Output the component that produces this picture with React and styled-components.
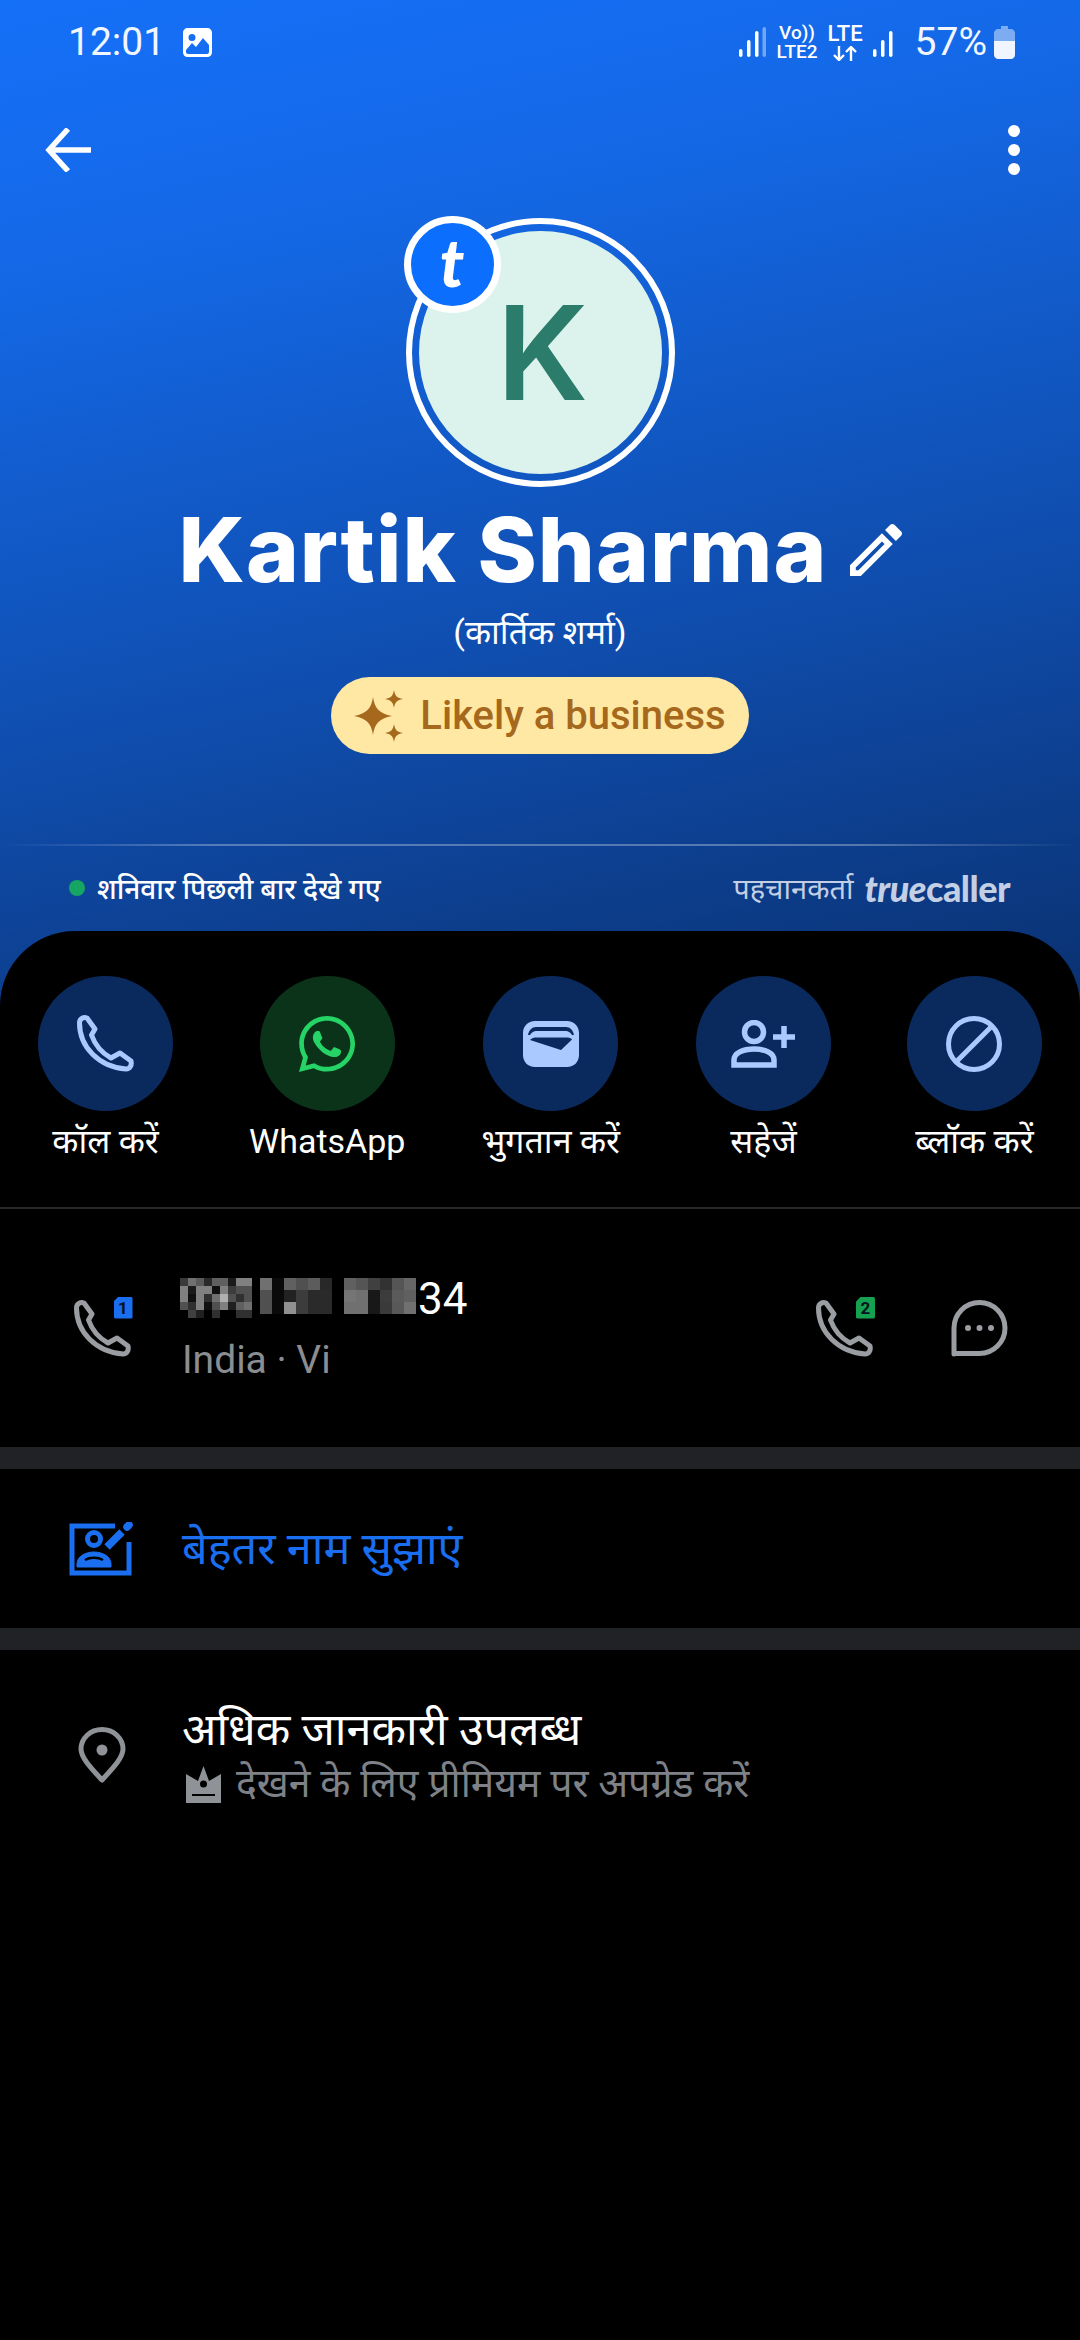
import React from "react";
import styled, { createGlobalStyle } from "styled-components";
import { FaWhatsapp } from "react-icons/fa";

const hindi = `Roboto, "Noto Sans", "Noto Sans Devanagari", "Lohit Devanagari", "DejaVu Sans", sans-serif`;

const GlobalStyle = createGlobalStyle`
  html, body {
    margin: 0;
    padding: 0;
    background: #000000;
  }
  * {
    box-sizing: border-box;
  }
`;

const PhoneIcon = ({ color, size = 57, stroke = 5 }) => (
  <svg width={size} height={size} viewBox="0 0 57 57" fill="none" stroke={color} strokeWidth={stroke} strokeLinejoin="round">
    <path d="M2.5 8 C2.5 3 7 2 10 3 L18 14 L14.5 20 C18 30 25 38 34 43 L43 38 L54 46 C55 50 53 54 49 54 C22 52 2.5 32 2.5 8Z" />
  </svg>
);

const ActionIcons = {
  wallet: (
    <svg width="56" height="46" viewBox="0 0 56 46">
      <path
        fill="#a9c9ff"
        fillRule="evenodd"
        d="M12 0 H44 C51 0 56 5 56 12 V34 C56 41 51 46 44 46 H12 C5 46 0 41 0 34 V12 C0 5 5 0 12 0Z M5 14 C6 9 9 6 13 6 H43 C47 6 50 9 51 14 L49 14 C47 11 45 10 43 10 H13 C11 10 9 11 7 14Z M7 19 C9 17 11 16.5 13 16.5 H43 C46 16.5 48 17 49 18.5 L38 29Z"
      />
    </svg>
  ),
  person: (
    <svg width="64" height="48" viewBox="0 0 64 48" fill="none" stroke="#a9c9ff" strokeWidth="5.5">
      <circle cx="23" cy="12" r="9.5" />
      <path d="M3 45 V40 C3 33 12 29 23 29 C34 29 43 33 43 40 V45Z" />
      <path d="M42 17 H64 M53 6 V28" />
    </svg>
  ),
  block: (
    <svg width="56" height="56" viewBox="0 0 56 56" fill="none" stroke="#a9c9ff" strokeWidth="5">
      <circle cx="28" cy="28" r="25.5" />
      <path d="M46 10 L10 46" />
    </svg>
  ),
};

const actions = [
  { label: "कॉल करें", icon: <PhoneIcon color="#a9c9ff" /> },
  { label: "WhatsApp", green: true, icon: <FaWhatsapp size={64} color="#25d366" /> },
  { label: "भुगतान करें", icon: ActionIcons.wallet },
  { label: "सहेजें", icon: ActionIcons.person },
  { label: "ब्लॉक करें", icon: ActionIcons.block },
];

// greys of the blurred part of the number: [x, cell size, rows]
const blurBlocks = [
  {
    x: 0,
    cell: 8,
    rows: [
      "3a705a2a60601a8080",
      "801a808010803c5050",
      "80108030 70b0503050",
      "503080105080206070",
      "004020003000003030",
    ],
  },
  { x: 80, cell: 12, rows: ["700a60505c28", "500a223c2a2a", "500a903c2a2a"] },
  { x: 164, cell: 12, rows: ["605540325566", "7570183c5a60", "7070183a5870"] },
];

function BlurredDigits() {
  const cells = [];
  blurBlocks.forEach((block) => {
    block.rows.forEach((row, r) => {
      const hex = row.replace(/\s/g, "");
      for (let c = 0; c < hex.length / 2; c++) {
        const g = hex.slice(c * 2, c * 2 + 2);
        cells.push(
          <rect key={`${block.x}-${r}-${c}`} x={block.x + c * block.cell} y={r * block.cell} width={block.cell} height={block.cell} fill={`#${g}${g}${g}`} />
        );
      }
    });
  });
  return (
    <svg width="236" height="42" viewBox="0 0 236 42" shapeRendering="crispEdges">
      {cells}
    </svg>
  );
}

export default function App() {
  return (
    <Page>
      <GlobalStyle />
      <StatusBar>
        <StatusLeft>
          <Clock>12:01</Clock>
          <svg width="29" height="29" viewBox="0 0 29 29">
            <path
              fill="#ffffff"
              fillRule="evenodd"
              d="M5 0 H24 C27 0 29 2 29 5 V24 C29 27 27 29 24 29 H5 C2 29 0 27 0 24 V5 C0 2 2 0 5 0Z M9 6 A3.5 3.5 0 1 0 9 13 A3.5 3.5 0 1 0 9 6Z M3 22 V24 C3 25 4 26 5 26 H24 C25 26 26 25 26 24 V17 L20 10 L13 19 L9 15Z"
            />
          </svg>
        </StatusLeft>
        <StatusRight>
          <Signal dim />
          <NetStack>
            <span>Vo))</span>
            <span>LTE2</span>
          </NetStack>
          <NetStack $wide>
            <span>LTE</span>
            <svg width="24" height="15" viewBox="0 0 24 15" fill="none" stroke="#ffffff" strokeWidth="2.4">
              <path d="M6 0 V14 M1 9 L6 14 L11 9 M18 15 V1 M13 6 L18 1 L23 6" />
            </svg>
          </NetStack>
          <Signal />
          <Battery>57%</Battery>
          <svg width="21" height="33" viewBox="0 0 21 33">
            <path fill="#ffffff" fillOpacity="0.45" d="M7 0 H14 V3 H17 C19 3 21 5 21 7 V15 H0 V7 C0 5 2 3 4 3 H7Z" />
            <path fill="#f0f5ff" d="M0 15 H21 V29 C21 31 19 33 17 33 H4 C2 33 0 31 0 29Z" />
          </svg>
        </StatusRight>
      </StatusBar>

      <Toolbar>
        <svg width="46" height="44" viewBox="0 0 46 44" fill="none" stroke="#ffffff" strokeWidth="5.5">
          <path d="M46 22 H4 M23 1 L4 22 L23 43" />
        </svg>
        <Dots>
          <i />
          <i />
          <i />
        </Dots>
      </Toolbar>

      <Hero>
        <Avatar>
          <AvatarInner>K</AvatarInner>
          <TrueBadge>t</TrueBadge>
        </Avatar>
        <NameRow>
          <Name>Kartik Sharma</Name>
          <svg width="52" height="54" viewBox="3 3 18 18">
            <path
              fill="#ffffff"
              d="M14.06 9.02l.92.92L5.92 19H5v-.92l9.06-9.06M17.66 3c-.25 0-.51.1-.7.29l-1.83 1.83 3.75 3.75 1.83-1.83c.39-.39.39-1.02 0-1.41l-2.34-2.34c-.2-.2-.45-.29-.71-.29zm-3.6 3.19L3 17.25V21h3.75L17.81 9.94l-3.75-3.75z"
            />
          </svg>
        </NameRow>
        <AltName>(कार्तिक शर्मा)</AltName>
        <Pill>
          <svg width="50" height="52" viewBox="0 0 50 52" fill="#a5681c">
            <path d="M19 7 C20.5 18 25 23.5 38 26 C25 28.5 20.5 34 19 45 C17.5 34 13 28.5 0 26 C13 23.5 17.5 18 19 7Z" />
            <path d="M40 0 C41 6 43 8 49 9 C43 10 41 12 40 18 C39 12 37 10 31 9 C37 8 39 6 40 0Z" />
            <path d="M40 34 C41 40 43 42 49 43 C43 44 41 46 40 52 C39 46 37 44 31 43 C37 42 39 40 40 34Z" />
          </svg>
          <PillText>Likely a business</PillText>
        </Pill>
      </Hero>

      <FadeLine />

      <InfoStrip>
        <LastSeen>
          <GreenDot />
          शनिवार पिछली बार देखे गए
        </LastSeen>
        <Credit>
          <CreditText>पहचानकर्ता</CreditText>
          <Brand>
            <em>true</em>caller
          </Brand>
        </Credit>
      </InfoStrip>

      <Sheet>
        <ActionRow>
          {actions.map((action) => (
            <Action key={action.label}>
              <ActionCircle $green={action.green}>{action.icon}</ActionCircle>
              <ActionLabel>{action.label}</ActionLabel>
            </Action>
          ))}
        </ActionRow>
        <ThinRule />

        <NumberRow>
          <IconSlot>
            <SimPhone>
              <PhoneIcon color="#9a9da1" />
              <SimBadge $color="#1a6ef0">1</SimBadge>
            </SimPhone>
          </IconSlot>
          <NumberText>
            <NumberLine>
              <BlurredDigits />
              <span>34</span>
            </NumberLine>
            <Carrier>India · Vi</Carrier>
          </NumberText>
          <RowEnd>
            <SimPhone>
              <PhoneIcon color="#9a9da1" />
              <SimBadge $color="#16a150">2</SimBadge>
            </SimPhone>
            <svg width="57" height="57" viewBox="0 0 57 57" fill="none" stroke="#9a9da1" strokeWidth="5" strokeLinejoin="round">
              <path d="M3 54 V28 A25.5 25.5 0 1 1 28.5 53.5 H3Z" />
              <g fill="#9a9da1" stroke="none">
                <circle cx="17" cy="28" r="3" />
                <circle cx="28.5" cy="28" r="3" />
                <circle cx="40" cy="28" r="3" />
              </g>
            </svg>
          </RowEnd>
        </NumberRow>
        <Band />

        <SuggestRow>
          <IconSlot>
            <svg width="66" height="54" viewBox="0 0 66 54" fill="none" stroke="#1a6ef0" strokeWidth="5">
              <path d="M46 4 H3 V51 H60 V20" />
              <circle cx="25" cy="17" r="6.5" />
              <path d="M8 45 V42 C8 34 17 30 25 30 C33 30 42 34 42 42 V45Z" fill="#1a6ef0" strokeWidth="1" />
              <path d="M16 38 C21 35 29 35 34 38" stroke="#000000" strokeWidth="2.5" />
              <path d="M38 25 L53 10" strokeWidth="7.5" />
              <path d="M58 5 L60 3" strokeWidth="7.5" strokeLinecap="round" />
            </svg>
          </IconSlot>
          <SuggestText>बेहतर नाम सुझाएं</SuggestText>
        </SuggestRow>
        <Band />

        <MoreRow>
          <IconSlot>
            <svg width="48" height="57" viewBox="0 0 48 57" fill="none" stroke="#8f9297" strokeWidth="5" strokeLinejoin="round">
              <path d="M24 53 C14 42 3 31 3 22 A21 19.5 0 0 1 45 22 C45 31 34 42 24 53Z" />
              <circle cx="24" cy="23" r="5.5" fill="#8f9297" stroke="none" />
            </svg>
          </IconSlot>
          <MoreText>
            <MoreTitle>अधिक जानकारी उपलब्ध</MoreTitle>
            <MoreSub>
              <svg width="37" height="37" viewBox="0 0 37 37">
                <path
                  fill="#8f9297"
                  fillRule="evenodd"
                  d="M18.5 0 L24 15 L36 8 V37 H1 V8 L13 15Z M18.5 14.5 A3.5 3.5 0 1 0 18.5 21.5 A3.5 3.5 0 1 0 18.5 14.5Z M7 28 V30 H30 V28Z"
                />
              </svg>
              देखने के लिए प्रीमियम पर अपग्रेड करें
            </MoreSub>
          </MoreText>
        </MoreRow>
      </Sheet>
    </Page>
  );
}

function Signal({ dim }) {
  return (
    <svg width="27" height="30" viewBox="0 0 27 30" fill="#ffffff">
      <rect x="0" y="22" width="3.5" height="8" rx="1.75" />
      <rect x="8" y="13" width="3.5" height="17" rx="1.75" />
      <rect x="16" y="4" width="3.5" height="26" rx="1.75" />
      {dim ? <rect x="23.5" y="0" width="3.5" height="30" rx="1.75" fillOpacity="0.4" /> : null}
    </svg>
  );
}

const Page = styled.div`
  width: 1080px;
  min-height: 2340px;
  display: flex;
  flex-direction: column;
  background-color: #000000;
  background-image: linear-gradient(168deg, #1570f8 0%, #1468e6 22%, #0f4cab 62%, #0a2f6c 100%);
  background-size: 1080px 1040px;
  background-repeat: no-repeat;
  font-family: Roboto, sans-serif;
  color: #ffffff;
`;

const StatusBar = styled.div`
  height: 82px;
  padding: 2px 65px 0 68px;
  display: flex;
  align-items: center;
  justify-content: space-between;
`;

const StatusLeft = styled.div`
  display: flex;
  align-items: center;
  gap: 18px;
`;

const Clock = styled.span`
  font-size: 39px;
  letter-spacing: 0;
  color: #f2f6ff;
`;

const StatusRight = styled.div`
  display: flex;
  align-items: center;
  gap: 10px;
`;

const NetStack = styled.div`
  display: flex;
  flex-direction: column;
  align-items: center;
  gap: ${(p) => (p.$wide ? "2px" : "0")};
  font-size: ${(p) => (p.$wide ? "22px" : "19px")};
  font-weight: 500;
  line-height: ${(p) => (p.$wide ? "20px" : "19px")};
`;

const Battery = styled.span`
  font-size: 39px;
  color: #f2f6ff;
  margin-left: 5px;
  margin-right: -3px;
`;

const Toolbar = styled.div`
  height: 136px;
  padding: 0 60px 0 45px;
  display: flex;
  align-items: center;
  justify-content: space-between;
`;

const Dots = styled.div`
  display: flex;
  flex-direction: column;
  gap: 7px;

  i {
    display: block;
    width: 12px;
    height: 12px;
    border-radius: 50%;
    background: #ffffff;
  }
`;

const Hero = styled.div`
  display: flex;
  flex-direction: column;
  align-items: center;
`;

const Avatar = styled.div`
  position: relative;
  width: 269px;
  height: 269px;
  padding: 7px;
  border: 6px solid #ffffff;
  border-radius: 50%;
`;

const AvatarInner = styled.div`
  width: 100%;
  height: 100%;
  padding-left: 5px;
  border-radius: 50%;
  background: #dcf2ec;
  display: flex;
  align-items: center;
  justify-content: center;
  font-family: Inter, sans-serif;
  font-weight: 600;
  font-size: 130px;
  line-height: 1;
  color: #2b7c6b;
`;

const TrueBadge = styled.div`
  position: absolute;
  top: -8px;
  left: -8px;
  width: 97px;
  height: 97px;
  border: 7px solid #ffffff;
  border-radius: 50%;
  background: #0c6efc;
  display: flex;
  align-items: center;
  justify-content: center;
  font-family: Lato, sans-serif;
  font-style: italic;
  font-weight: 900;
  font-size: 66px;
  line-height: 1;
  padding-bottom: 6px;
  color: #ffffff;
`;

const NameRow = styled.div`
  margin-top: 13px;
  height: 100px;
  display: flex;
  align-items: center;
  gap: 22px;
`;

const Name = styled.div`
  font-family: Inter, sans-serif;
  font-weight: 800;
  font-size: 90px;
  letter-spacing: 1px;
  line-height: 100px;
  white-space: nowrap;
`;

const AltName = styled.div`
  margin-top: 7px;
  font-family: ${hindi};
  font-size: 34px;
  line-height: 50px;
`;

const Pill = styled.div`
  margin-top: 20px;
  height: 77px;
  padding: 0 23px;
  display: flex;
  align-items: center;
  gap: 16px;
  border-radius: 39px;
  background: #ffe8a3;
`;

const PillText = styled.span`
  font-weight: 500;
  font-size: 40px;
  color: #a5681c;
`;

const FadeLine = styled.div`
  margin-top: 90px;
  height: 2px;
  background: linear-gradient(90deg, rgba(255, 255, 255, 0), rgba(255, 255, 255, 0.3) 20%, rgba(255, 255, 255, 0.3) 80%, rgba(255, 255, 255, 0));
`;

const InfoStrip = styled.div`
  height: 85px;
  padding: 0 70px 2px 69px;
  display: flex;
  align-items: center;
  justify-content: space-between;
`;

const LastSeen = styled.div`
  display: flex;
  align-items: center;
  gap: 12px;
  font-family: ${hindi};
  font-weight: 500;
  font-size: 28px;
`;

const GreenDot = styled.span`
  width: 16px;
  height: 16px;
  border-radius: 50%;
  background: #16a562;
`;

const Credit = styled.div`
  display: flex;
  align-items: center;
  gap: 11px;
  color: #c3cfe4;
`;

const CreditText = styled.span`
  font-family: ${hindi};
  font-size: 29px;
`;

const Brand = styled.span`
  font-family: Lato, sans-serif;
  font-weight: 900;
  font-size: 36px;
  letter-spacing: -0.5px;

  em {
    font-style: italic;
  }
`;

const Sheet = styled.div`
  flex: 1;
  padding-top: 45px;
  background: #000000;
  border-radius: 75px 75px 0 0;
`;

const ActionRow = styled.div`
  padding: 0 38px 43px;
  display: flex;
  justify-content: space-between;
`;

const Action = styled.div`
  display: flex;
  flex-direction: column;
  align-items: center;
  gap: 7px;
`;

const ActionCircle = styled.div`
  width: 135px;
  height: 135px;
  border-radius: 50%;
  display: flex;
  align-items: center;
  justify-content: center;
  background: ${(p) => (p.$green ? "#0b3319" : "#0a2a5e")};
`;

const ActionLabel = styled.div`
  font-family: ${hindi};
  font-size: 34px;
  line-height: 46px;
  white-space: nowrap;
`;

const ThinRule = styled.div`
  height: 2px;
  background: #26272a;
`;

const Band = styled.div`
  height: 22px;
  background: #212226;
`;

const IconSlot = styled.div`
  width: 182px;
  padding-left: 22px;
  display: flex;
  justify-content: center;
  flex-shrink: 0;
`;

const NumberRow = styled.div`
  height: 238px;
  padding-right: 72px;
  display: flex;
  align-items: center;
`;

const SimPhone = styled.div`
  position: relative;
  width: 57px;
  height: 57px;
`;

const SimBadge = styled.span`
  position: absolute;
  top: -3px;
  right: -2px;
  width: 19px;
  height: 22px;
  display: flex;
  align-items: center;
  justify-content: center;
  font-size: 17px;
  font-weight: 700;
  color: #06121f;
  background: ${(p) => p.$color};
  border-radius: 2px;
  clip-path: polygon(5px 0, 100% 0, 100% 100%, 0 100%, 0 5px);
`;

const NumberText = styled.div`
  flex: 1;
  display: flex;
  flex-direction: column;
  gap: 7px;
`;

const NumberLine = styled.div`
  height: 56px;
  padding-top: 4px;
  margin-left: -2px;
  display: flex;
  align-items: center;
  gap: 2px;
  font-size: 44px;

  svg {
    margin-top: 1px;
  }
`;

const Carrier = styled.div`
  font-size: 39px;
  line-height: 56px;
  color: #8a8d91;
`;

const RowEnd = styled.div`
  display: flex;
  align-items: center;
  gap: 78px;
`;

const SuggestRow = styled.div`
  height: 159px;
  display: flex;
  align-items: center;
`;

const SuggestText = styled.div`
  font-family: ${hindi};
  font-size: 45px;
  padding-bottom: 4px;
  color: #1a6ef0;
`;

const MoreRow = styled.div`
  padding-top: 52px;
  display: flex;
  align-items: center;
`;

const MoreText = styled.div`
  display: flex;
  flex-direction: column;
  gap: 1px;
`;

const MoreTitle = styled.div`
  font-family: ${hindi};
  font-size: 45px;
  line-height: 56px;
`;

const MoreSub = styled.div`
  display: flex;
  align-items: center;
  gap: 14px;
  margin-left: 3px;
  font-family: ${hindi};
  font-size: 39.2px;
  line-height: 50px;
  color: #7e8288;
`;
